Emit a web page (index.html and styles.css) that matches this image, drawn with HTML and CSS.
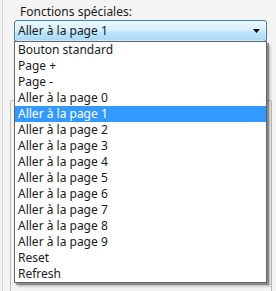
FILE: index.html
```html
<!DOCTYPE html>
<html lang="fr">
<head>
    <meta charset="UTF-8">
    <title>Fonctions spéciales</title>
    <link rel="stylesheet" href="styles.css">
</head>
<body>
    <div class="panel">
        <div class="label">Fonctions spéciales:</div>
        <div class="combo">
            <span class="combo-value">Aller à la page 1</span>
            <svg class="combo-arrow" width="7" height="4" viewBox="0 0 7 4"><path d="M0 0H7L3.5 4Z" fill="#000"/></svg>
        </div>
        <div class="group"></div>

        <ul class="dropdown">
            <li>Bouton standard</li>
            <li>Page +</li>
            <li>Page -</li>
            <li>Aller à la page 0</li>
            <li class="selected">Aller à la page 1</li>
            <li>Aller à la page 2</li>
            <li>Aller à la page 3</li>
            <li>Aller à la page 4</li>
            <li>Aller à la page 5</li>
            <li>Aller à la page 6</li>
            <li>Aller à la page 7</li>
            <li>Aller à la page 8</li>
            <li>Aller à la page 9</li>
            <li>Reset</li>
            <li>Refresh</li>
        </ul>
    </div>
</body>
</html>
```

FILE: styles.css
```css
body {
    margin: 0;
    background-color: #f4f4f4;
    font-family: 'Segoe UI', 'Noto Sans', sans-serif;
    font-size: 12px;
    color: #1a1a1a;
}
.panel {
    position: relative;
    width: 276px;
    height: 291px;
    overflow: hidden;
    border-left: 1px solid #d8d8d8;
    margin-left: 2px;
    box-sizing: border-box;
}
.label {
    padding: 5px 0 0 17px;
    height: 15px;
    line-height: 14px;
}
.combo {
    margin-left: 11px;
    width: 253px;
    height: 22px;
    box-sizing: border-box;
    border: 1px solid #3c7fb1;
    border-radius: 3px;
    background: linear-gradient(#eaf6fd 0%, #d9f0fc 45%, #bee6fd 55%, #a7d9f5 100%);
    display: flex;
    align-items: center;
    justify-content: space-between;
    padding: 0 6px 0 3px;
    box-shadow: inset 0 0 0 1px rgba(255, 255, 255, 0.4);
}
.combo-value {
    line-height: 16px;
}
.combo-arrow {
    display: block;
}
.group {
    margin: 58px 0 0 7px;
    width: 260px;
    height: 220px;
    border: 1px solid #bcbcbc;
    border-radius: 2px;
}
.dropdown {
    position: absolute;
    left: 11px;
    top: 41px;
    width: 253px;
    margin: 0;
    padding: 0;
    list-style: none;
    background: #fff;
    border: 1px solid #646464;
    box-sizing: border-box;
    box-shadow: 2px 2px 1px rgba(0, 0, 0, 0.35), 4px 4px 2px rgba(0, 0, 0, 0.15);
}
.dropdown li {
    height: 16px;
    line-height: 16px;
    padding-left: 3px;
    white-space: nowrap;
}
.dropdown li.selected {
    background: #3399ff;
    color: #fff;
}
```
